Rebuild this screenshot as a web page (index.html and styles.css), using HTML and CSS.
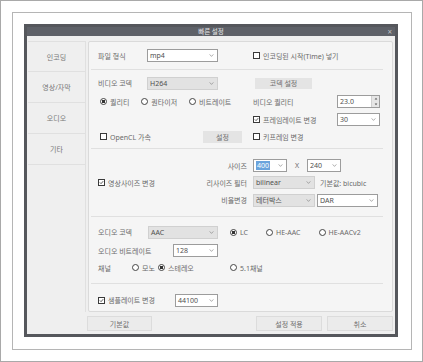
FILE: index.html
```html
<!DOCTYPE html>
<html lang="ko">
<head>
    <meta charset="UTF-8">
    <title>빠른 설정</title>
    <link rel="stylesheet" href="styles.css">
</head>
<body>
    <div class="page">
        <div class="frame">
            <div class="dialog">
                <!-- 제목 표시줄 -->
                <div class="titlebar">
                    <span class="title">빠른 설정</span>
                    <span class="close">×</span>
                </div>

                <div class="body">
                    <div class="main">
                        <!-- 왼쪽 탭 -->
                        <ul class="nav">
                            <li>인코딩</li>
                            <li>영상/자막</li>
                            <li>오디오</li>
                            <li>기타</li>
                        </ul>

                        <div class="panel">
                            <!-- 파일 형식 -->
                            <div class="sec sec1">
                                <div class="left">
                                    <span class="lbl">파일 형식</span>
                                    <div class="sel sel-fmt">mp4<svg class="chev" viewBox="0 0 6 4"><path d="M0.5 0.5 L3 3.2 L5.5 0.5"/></svg></div>
                                </div>
                                <span class="chk"><i class="box"></i>인코딩된 시작(Time) 넣기</span>
                            </div>

                            <!-- 비디오 -->
                            <div class="sec sec2">
                                <div class="row r1">
                                    <div class="left">
                                        <span class="lbl">비디오 코덱</span>
                                        <div class="sel sel-fmt dis">H264<svg class="chev" viewBox="0 0 6 4"><path d="M0.5 0.5 L3 3.2 L5.5 0.5"/></svg></div>
                                    </div>
                                    <div class="btn btn-codec">코덱 설정</div>
                                </div>
                                <div class="row r2">
                                    <div class="left radios">
                                        <span class="rad on"><i class="dot"></i>퀄리티</span>
                                        <span class="rad"><i class="dot"></i>퀀타이저</span>
                                        <span class="rad"><i class="dot"></i>비트레이트</span>
                                    </div>
                                    <div class="right">
                                        <span class="rlbl">비디오 퀄리티</span>
                                        <div class="spin">23.0<span class="arrows"><svg viewBox="0 0 6 4"><path d="M1 3.5 L3 1 L5 3.5Z"/></svg><svg viewBox="0 0 6 4"><path d="M1 0.5 L3 3 L5 0.5Z"/></svg></span></div>
                                    </div>
                                </div>
                                <div class="row r3">
                                    <div class="left"></div>
                                    <div class="right">
                                        <span class="chk rlbl"><i class="box"><svg viewBox="0 0 7 7"><path d="M1.2 3.4 L2.9 5.1 L5.9 1.6"/></svg></i>프레임레이트 변경</span>
                                        <div class="sel sel-num">30<svg class="chev" viewBox="0 0 6 4"><path d="M0.5 0.5 L3 3.2 L5.5 0.5"/></svg></div>
                                    </div>
                                </div>
                                <div class="row r4">
                                    <div class="left">
                                        <span class="chk opencl"><i class="box"></i>OpenCL 가속</span>
                                        <div class="btn btn-set">설정</div>
                                    </div>
                                    <span class="chk"><i class="box"></i>키프레임 변경</span>
                                </div>
                            </div>

                            <!-- 영상 크기 -->
                            <div class="sec sec3">
                                <span class="chk resize"><i class="box"><svg viewBox="0 0 7 7"><path d="M1.2 3.4 L2.9 5.1 L5.9 1.6"/></svg></i>영상사이즈 변경</span>
                                <span class="glbl g1">사이즈</span>
                                <div class="ctrl g1">
                                    <div class="sel sel-size"><span class="hl">400</span><svg class="chev" viewBox="0 0 6 4"><path d="M0.5 0.5 L3 3.2 L5.5 0.5"/></svg></div>
                                    <span class="x">X</span>
                                    <div class="sel sel-size">240<svg class="chev" viewBox="0 0 6 4"><path d="M0.5 0.5 L3 3.2 L5.5 0.5"/></svg></div>
                                </div>
                                <span class="glbl g2">리사이즈 필터</span>
                                <div class="ctrl g2">
                                    <div class="sel sel-filter dis">bilinear<svg class="chev" viewBox="0 0 6 4"><path d="M0.5 0.5 L3 3.2 L5.5 0.5"/></svg></div>
                                    <span class="note">기본값: bicubic</span>
                                </div>
                                <span class="glbl g3">비율변경</span>
                                <div class="ctrl g3 tight">
                                    <div class="sel sel-filter dis">레터박스<svg class="chev" viewBox="0 0 6 4"><path d="M0.5 0.5 L3 3.2 L5.5 0.5"/></svg></div>
                                    <div class="sel sel-dar">DAR<svg class="chev" viewBox="0 0 6 4"><path d="M0.5 0.5 L3 3.2 L5.5 0.5"/></svg></div>
                                </div>
                            </div>

                            <!-- 오디오 -->
                            <div class="sec sec4">
                                <div class="row a1">
                                    <span class="lbl lbl-ac">오디오 코덱</span>
                                    <div class="sel sel-ac dis">AAC<svg class="chev" viewBox="0 0 6 4"><path d="M0.5 0.5 L3 3.2 L5.5 0.5"/></svg></div>
                                    <div class="radios aac">
                                        <span class="rad on"><i class="dot"></i>LC</span>
                                        <span class="rad"><i class="dot"></i>HE-AAC</span>
                                        <span class="rad"><i class="dot"></i>HE-AACv2</span>
                                    </div>
                                </div>
                                <div class="row a2">
                                    <span class="lbl lbl-abr">오디오 비트레이트</span>
                                    <div class="sel sel-abr">128<svg class="chev" viewBox="0 0 6 4"><path d="M0.5 0.5 L3 3.2 L5.5 0.5"/></svg></div>
                                </div>
                                <div class="row a3">
                                    <span class="lbl lbl-ch">채널</span>
                                    <span class="rad mono"><i class="dot"></i>모노</span>
                                    <span class="rad on stereo"><i class="dot"></i>스테레오</span>
                                    <span class="rad"><i class="dot"></i>5.1채널</span>
                                </div>
                            </div>

                            <!-- 샘플레이트 -->
                            <div class="sec sec5">
                                <div class="row">
                                    <span class="chk srate"><i class="box"><svg viewBox="0 0 7 7"><path d="M1.2 3.4 L2.9 5.1 L5.9 1.6"/></svg></i>샘플레이트 변경</span>
                                    <div class="sel sel-sr">44100<svg class="chev" viewBox="0 0 6 4"><path d="M0.5 0.5 L3 3.2 L5.5 0.5"/></svg></div>
                                </div>
                            </div>
                        </div>
                    </div>

                    <!-- 하단 버튼 -->
                    <div class="footer">
                        <div class="btn btn-reset">기본값</div>
                        <div class="btn btn-apply">설정 적용</div>
                        <div class="btn btn-cancel">취소</div>
                    </div>
                </div>
            </div>
        </div>
    </div>
</body>
</html>
```

FILE: styles.css
```css
/* 전체 */
* {
    box-sizing: border-box;
}

body {
    margin: 0;
    font-family: "Noto Sans", "Noto Sans CJK KR", sans-serif;
    font-size: 7px;
    color: #6a6a6a;
    background-color: #fff;
}

/* 바깥 테두리 */
.page {
    width: 423px;
    height: 362px;
    border: 1px solid #a9a9a9;
    padding: 11px;
}

.frame {
    width: 400px;
    height: 338px;
    border: 1px solid #b5b5b5;
    padding: 11px;
}

/* 대화상자 */
.dialog {
    width: 374px;
    height: 313px;
    border: 3px solid #55575c;
    background-color: #efefef;
    display: flex;
    flex-direction: column;
}

.titlebar {
    height: 9px;
    background-color: #5e6168;
    display: grid;
    grid-template-columns: 1fr auto 1fr;
    align-items: center;
    color: #e6e6e6;
}

.title {
    grid-column: 2;
    font-size: 6.5px;
    line-height: 9px;
}

.close {
    justify-self: end;
    margin-right: 3px;
    font-size: 8px;
    line-height: 9px;
    color: #bfc0c3;
}

.body {
    flex: 1;
    padding: 5px 2px 3px 1px;
    display: flex;
    flex-direction: column;
    gap: 4px;
}

.main {
    height: 271px;
    display: flex;
    gap: 2px;
}

/* 왼쪽 탭 */
.nav {
    list-style: none;
    margin: 0;
    padding: 0;
    width: 58px;
    border-right: 1px solid #e0e0e0;
}

.nav li {
    height: 31px;
    border-bottom: 1px solid #e0e0e0;
    display: flex;
    align-items: center;
    justify-content: center;
    color: #777;
}

.nav li:first-child {
    border-top: 1px solid #e0e0e0;
}

/* 설정 패널 */
.panel {
    width: 305px;
    border: 1px solid #dadada;
    border-radius: 2px;
    background-color: #f5f5f5;
}

.sec {
    margin: 0 9px 0 2px;
    padding-left: 7px;
    border-top: 1px solid #e0e0e0;
}

.sec1 {
    border-top: 0;
    height: 27px;
    display: flex;
    align-items: center;
}

.sec2 {
    height: 79px;
    padding-top: 4px;
}

.sec3 {
    height: 68px;
    padding-top: 8px;
    display: grid;
    grid-template-columns: 94px 49px auto;
    grid-template-rows: 17px 17px 18px;
    column-gap: 6px;
    align-items: center;
}

.sec4 {
    height: 67px;
    padding-top: 6px;
}

.sec5 {
    height: 28px;
    padding-top: 8px;
}

.row {
    display: flex;
    align-items: center;
}

.r1 { height: 18px; }
.r2 { height: 19px; }
.r3 { height: 17px; }
.r4 { height: 17px; }
.a1 { height: 18px; }
.a2 { height: 19px; }
.a3 { height: 15px; }
.sec5 .row { height: 16px; }

.left {
    width: 155px;
    display: flex;
    align-items: center;
}

.right {
    display: flex;
    align-items: center;
}

.lbl {
    width: 49px;
}

.rlbl {
    width: 84px;
}

/* 체크박스 / 라디오 */
.chk,
.rad {
    display: inline-flex;
    align-items: center;
    gap: 3px;
    white-space: nowrap;
}

.box {
    width: 7px;
    height: 7px;
    border: 1px solid #3a3a3a;
    background-color: #fff;
    display: inline-flex;
}

.box svg {
    width: 5px;
    height: 5px;
    fill: none;
    stroke: #333;
    stroke-width: 1.1;
}

.dot {
    width: 7px;
    height: 7px;
    border: 1px solid #444;
    border-radius: 50%;
    background-color: #fff;
}

.rad.on .dot {
    background: radial-gradient(circle, #333 0 1.5px, #fff 2px);
}

.radios {
    display: flex;
    align-items: center;
    gap: 12px;
    padding-left: 2px;
}

.aac {
    margin-left: 12px;
    gap: 18px;
    padding-left: 0;
}

.opencl {
    width: 105px;
    padding-left: 2px;
}

.resize {
    grid-row: 2;
    grid-column: 1;
}

.srate {
    width: 77px;
}

.mono { width: 26px; }
.stereo { width: 72px; }
.lbl-ac { width: 50px; }
.lbl-abr { width: 75px; }
.lbl-ch { width: 34px; }

/* 콤보박스 */
.sel {
    height: 13px;
    border: 1px solid #9c9c9c;
    background-color: #fff;
    display: flex;
    align-items: center;
    justify-content: space-between;
    padding: 0 3px 0 2px;
    color: #505050;
    white-space: nowrap;
}

.sel.dis {
    background-color: #e2e2e2;
    border-color: #d0d0d0;
}

.chev {
    width: 5px;
    height: 3px;
    fill: none;
    stroke: #888;
    stroke-width: 0.9;
}

.sel-fmt { width: 71px; }
.sel-num { width: 43px; }
.sel-size { width: 34px; }
.sel-filter { width: 62px; }
.sel-dar { width: 61px; }
.sel-ac { width: 70px; }
.sel-abr { width: 45px; }
.sel-sr { width: 43px; }

.hl {
    background-color: #6aa3dc;
    color: #fff;
    padding: 0 1px;
}

.spin {
    width: 43px;
    height: 13px;
    border: 1px solid #9c9c9c;
    background-color: #fff;
    display: flex;
    align-items: center;
    justify-content: space-between;
    padding-left: 2px;
    color: #505050;
}

.arrows {
    width: 8px;
    height: 11px;
    background-color: #e6e6e6;
    border-left: 1px solid #d0d0d0;
    display: flex;
    flex-direction: column;
    align-items: center;
    justify-content: space-around;
}

.arrows svg {
    width: 4px;
    height: 3px;
    fill: #555;
}

/* 영상 크기 격자 */
.glbl {
    grid-column: 2;
    text-align: right;
    white-space: nowrap;
}

.ctrl {
    grid-column: 3;
    display: flex;
    align-items: center;
    gap: 5px;
}

.g1 { grid-row: 1; }
.g2 { grid-row: 2; }
.g3 { grid-row: 3; }

.ctrl.g1 {
    gap: 8px;
}

.ctrl.tight {
    gap: 2px;
}

.note {
    white-space: nowrap;
}

/* 버튼 */
.btn {
    display: flex;
    align-items: center;
    justify-content: center;
    background-color: #e4e4e4;
    color: #707070;
    white-space: nowrap;
}

.btn-codec {
    width: 57px;
    height: 11px;
    margin-left: 2px;
}

.btn-set {
    width: 39px;
    height: 12px;
}

.footer {
    height: 15px;
    display: flex;
}

.footer .btn {
    border: 1px solid #dcdcdc;
    background-color: #ebebeb;
}

.btn-reset {
    width: 65px;
    margin-left: 59px;
}

.btn-apply {
    width: 66px;
    margin-left: auto;
}

.btn-cancel {
    width: 66px;
    margin-left: 5px;
}
```
